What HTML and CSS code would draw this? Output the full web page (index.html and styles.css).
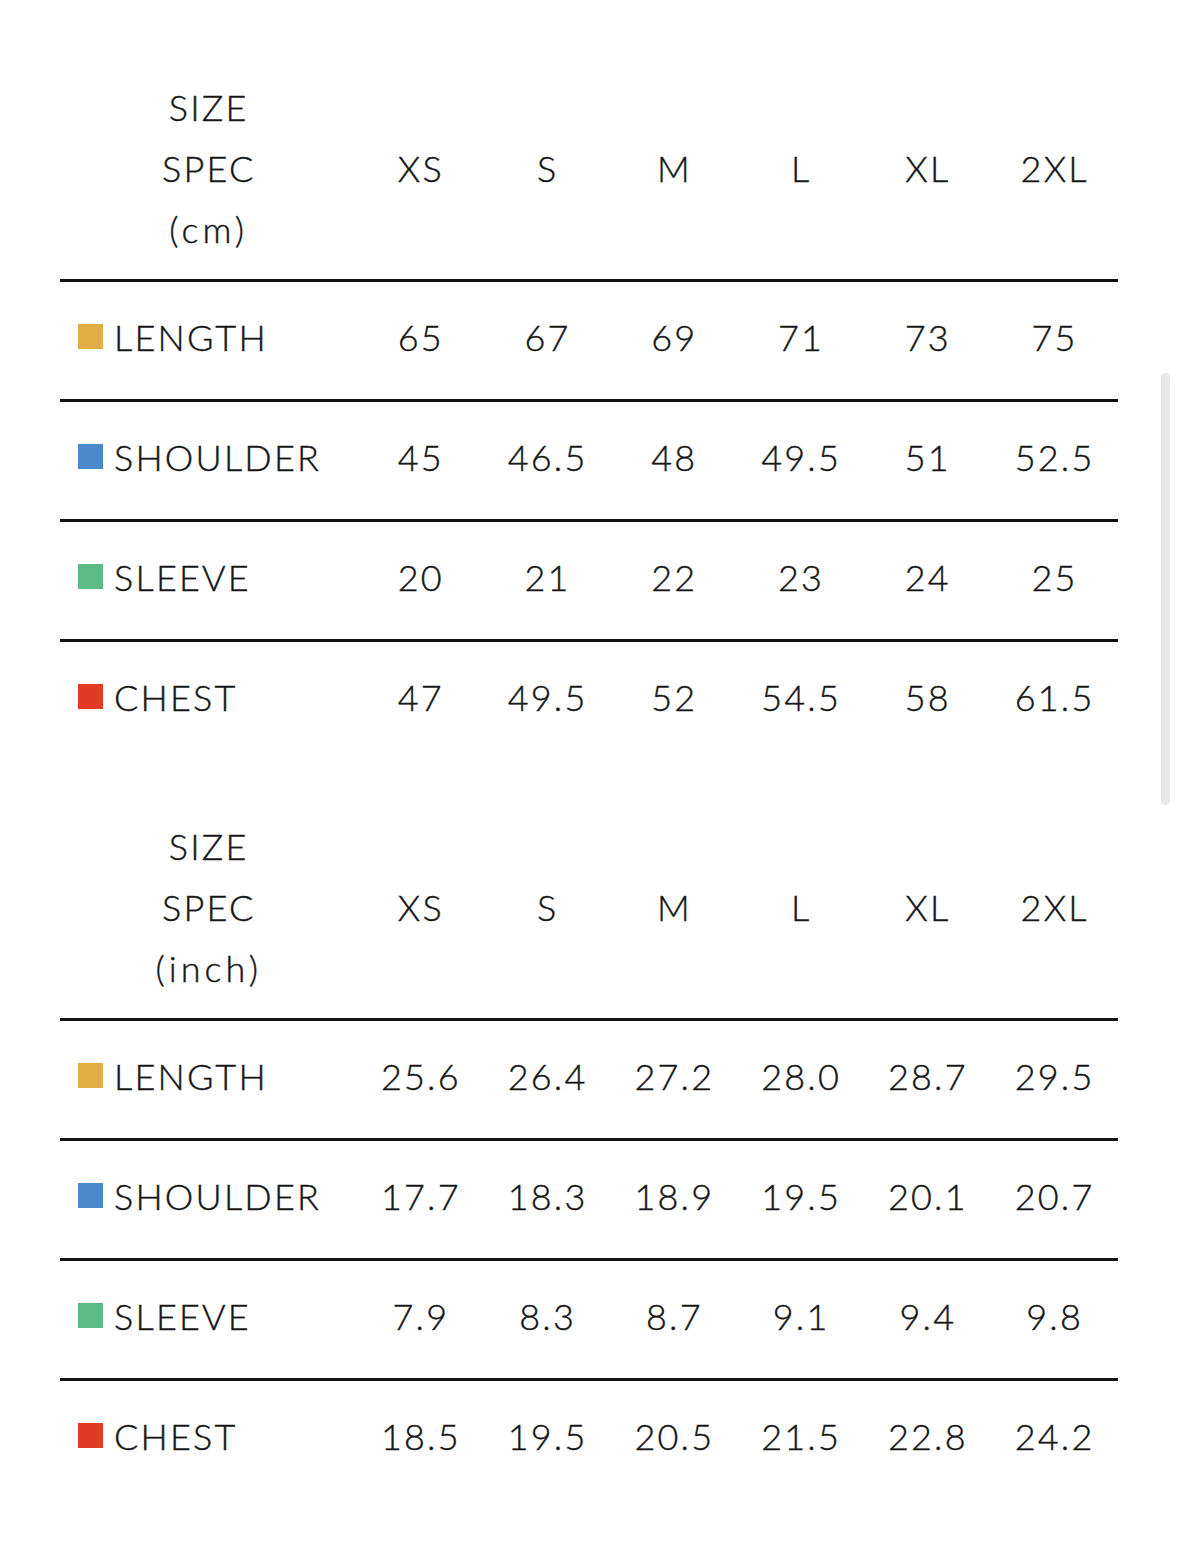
FILE: index.html
```html
<!DOCTYPE html>
<html>
<head>
<meta charset="utf-8">
<link rel="stylesheet" href="styles.css">
</head>
<body>
<div class="page">
  <section class="chart chart-cm">
    <div class="row head">
      <div class="spec"><span>SIZE</span><span>SPEC</span><span class="unit">(cm)</span></div>
      <div class="cell">XS</div><div class="cell">S</div><div class="cell">M</div><div class="cell">L</div><div class="cell">XL</div><div class="cell">2XL</div>
    </div>
    <div class="row">
      <div class="label"><i class="sw yellow"></i>LENGTH</div>
      <div class="cell">65</div><div class="cell">67</div><div class="cell">69</div><div class="cell">71</div><div class="cell">73</div><div class="cell">75</div>
    </div>
    <div class="row">
      <div class="label"><i class="sw blue"></i>SHOULDER</div>
      <div class="cell">45</div><div class="cell">46.5</div><div class="cell">48</div><div class="cell">49.5</div><div class="cell">51</div><div class="cell">52.5</div>
    </div>
    <div class="row">
      <div class="label"><i class="sw green"></i>SLEEVE</div>
      <div class="cell">20</div><div class="cell">21</div><div class="cell">22</div><div class="cell">23</div><div class="cell">24</div><div class="cell">25</div>
    </div>
    <div class="row last">
      <div class="label"><i class="sw red"></i>CHEST</div>
      <div class="cell">47</div><div class="cell">49.5</div><div class="cell">52</div><div class="cell">54.5</div><div class="cell">58</div><div class="cell">61.5</div>
    </div>
  </section>

  <section class="chart chart-inch">
    <div class="row head">
      <div class="spec"><span>SIZE</span><span>SPEC</span><span class="unit">(inch)</span></div>
      <div class="cell">XS</div><div class="cell">S</div><div class="cell">M</div><div class="cell">L</div><div class="cell">XL</div><div class="cell">2XL</div>
    </div>
    <div class="row">
      <div class="label"><i class="sw yellow"></i>LENGTH</div>
      <div class="cell">25.6</div><div class="cell">26.4</div><div class="cell">27.2</div><div class="cell">28.0</div><div class="cell">28.7</div><div class="cell">29.5</div>
    </div>
    <div class="row">
      <div class="label"><i class="sw blue"></i>SHOULDER</div>
      <div class="cell">17.7</div><div class="cell">18.3</div><div class="cell">18.9</div><div class="cell">19.5</div><div class="cell">20.1</div><div class="cell">20.7</div>
    </div>
    <div class="row">
      <div class="label"><i class="sw green"></i>SLEEVE</div>
      <div class="cell">7.9</div><div class="cell">8.3</div><div class="cell">8.7</div><div class="cell">9.1</div><div class="cell">9.4</div><div class="cell">9.8</div>
    </div>
    <div class="row last">
      <div class="label"><i class="sw red"></i>CHEST</div>
      <div class="cell">18.5</div><div class="cell">19.5</div><div class="cell">20.5</div><div class="cell">21.5</div><div class="cell">22.8</div><div class="cell">24.2</div>
    </div>
  </section>
  <div class="scrollbar"></div>
</div>
</body>
</html>
```

FILE: styles.css
```css
html, body {
  margin: 0;
  padding: 0;
  background: #ffffff;
}

body {
  font-family: "Lato", "Noto Sans", sans-serif;
  font-weight: 300;
  font-size: 36px;
  color: #161616;
  letter-spacing: 2.2px;
  -webkit-text-stroke: 0.4px #161616;
}

.page {
  position: relative;
  width: 1179px;
  height: 1559px;
  padding-left: 60px;
  padding-top: 77px;
  box-sizing: border-box;
}

.chart {
  width: 1058px;
}

.chart-inch {
  margin-top: 57px;
}

.row {
  display: grid;
  grid-template-columns: 297.5px repeat(6, 1fr);
  align-items: center;
  height: 117px;
  padding-bottom: 8px;
  box-sizing: content-box;
  border-bottom: 3px solid #111111;
}

.row:not(.head) {
  box-sizing: border-box;
  height: 120px;
}

.row.head {
  height: 202px;
  padding-bottom: 0;
  align-items: start;
}

.row.head .cell {
  padding-top: 61px;
  line-height: 61px;
}

.row.last {
  border-bottom: none;
  height: 117px;
}

.spec {
  display: flex;
  flex-direction: column;
  align-items: center;
  line-height: 61px;
}

.unit {
  letter-spacing: 4px;
}

.cell {
  text-align: center;
}

.label {
  display: flex;
  align-items: center;
  padding-left: 18px;
}

.sw {
  display: block;
  width: 25px;
  height: 25px;
  margin-right: 11px;
  flex: none;
}

.yellow { background: #e1ad45; }
.blue { background: #4b8acc; }
.green { background: #5cba83; }
.red { background: #e33a24; }

.scrollbar {
  position: absolute;
  left: 1161px;
  top: 373px;
  width: 9px;
  height: 432px;
  border-radius: 5px;
  background: #e8e8e8;
}
```
